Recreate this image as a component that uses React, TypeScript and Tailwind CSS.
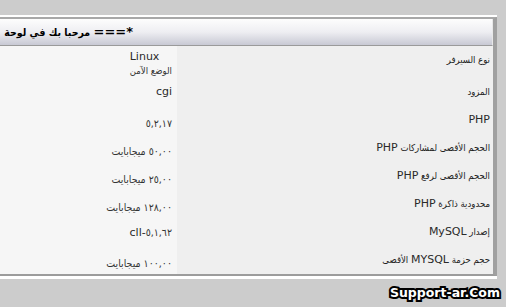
import React from "react";

type Row = { label: React.ReactNode; value: React.ReactNode; first?: boolean; low?: boolean };

const L = ({ children }: { children: React.ReactNode }) => (
  <span className="text-[11px] text-[#2a2a2a]" style={{ fontFamily: '"DejaVu Sans", sans-serif' }}>
    {children}
  </span>
);

const rows: Row[] = [
  {
    label: "نوع السيرفر",
    first: true,
    value: (
      <div className="flex flex-col items-end">
        <span className="leading-[15px]"><L>Linux</L></span>
        <span className="leading-[13px] text-[9.5px]">الوضع الآمن</span>
      </div>
    ),
  },
  { label: "المزود", value: <L>cgi</L> },
  { label: <L>PHP</L>, value: "٥,٢,١٧", low: true },
  { label: <>الحجم الأقصى لمشاركات <L>PHP</L></>, value: "٥٠,٠٠ ميجابايت", low: true },
  { label: <>الحجم الأقصى لرفع <L>PHP</L></>, value: "٢٥,٠٠ ميجابايت", low: true },
  { label: <>محدودية ذاكرة <L>PHP</L></>, value: "١٢٨,٠٠ ميجابايت", low: true },
  {
    label: <>إصدار <L>MySQL</L></>,
    value: (
      <span dir="ltr" className="relative top-[1px]">
        <L>cll-</L>٥,١,٦٢
      </span>
    ),
  },
  { label: <>حجم حزمة <L>MYSQL</L> الأقصى</>, value: "١٠٠,٠٠ ميجابايت", low: true },
];

export default function App() {
  return (
    <div
      className="w-[506px] h-[307px] bg-[#cccccc] overflow-hidden pt-[15px]"
      style={{ fontFamily: '"DejaVu Sans Condensed", "DejaVu Sans", sans-serif' }}
    >
      {/* panel, its left edge lies off screen */}
      <div className="w-[497px] border-t-2 border-t-white border-b-[3px] border-b-white">
        <div className="border-t-2 border-t-[#a8a8a8] border-r-[4px] border-r-[#a0a0a0] border-b-2 border-b-[#9c9c9c]">
          <div
            dir="rtl"
            className="h-[27px] flex items-center pr-[359px] whitespace-nowrap overflow-hidden bg-gradient-to-b from-[#fdfdfd] via-[#eeeef2] to-[#c8c9d4] border-b border-b-[#9a9a9a] border-r border-r-[#e8e8e8] text-[10.5px] font-bold text-black"
          >
            <span>
              <span className="text-[13px]" style={{ fontFamily: '"DejaVu Sans", sans-serif' }}>
                *===
              </span>{" "}
              مرحبا بك في لوحة
            </span>
          </div>
          <div className="flex flex-col text-[9.5px] text-[#222]">
            {rows.map((r, i) => (
              <div
                key={i}
                className={`flex ${r.first ? "h-[32px] items-start" : "h-[28px] items-center"}`}
              >
                <div
                  className={`w-[177px] h-full bg-[#f6f6f6] flex justify-end pr-[5px] whitespace-nowrap text-[10.5px] text-[#333] ${
                    r.first ? "pt-[3px]" : r.low ? "items-center pt-[7px]" : "items-center"
                  }`}
                >
                  <span dir="rtl">{r.value}</span>
                </div>
                <div
                  dir="rtl"
                  className={`flex-1 h-full bg-[#efefef] pr-[3px] whitespace-nowrap flex ${
                    r.first ? "pt-[7px]" : "items-center"
                  }`}
                >
                  <span>{r.label}</span>
                </div>
              </div>
            ))}
          </div>
        </div>
      </div>
      <div className="flex justify-end pr-[6px] pt-[5px]">
        <span
          className="text-[12.5px] font-bold text-white [-webkit-text-stroke:4px_#000] [paint-order:stroke_fill]"
          style={{ fontFamily: '"DejaVu Sans", sans-serif' }}
        >
          Support-ar.Com
        </span>
      </div>
    </div>
  );
}
